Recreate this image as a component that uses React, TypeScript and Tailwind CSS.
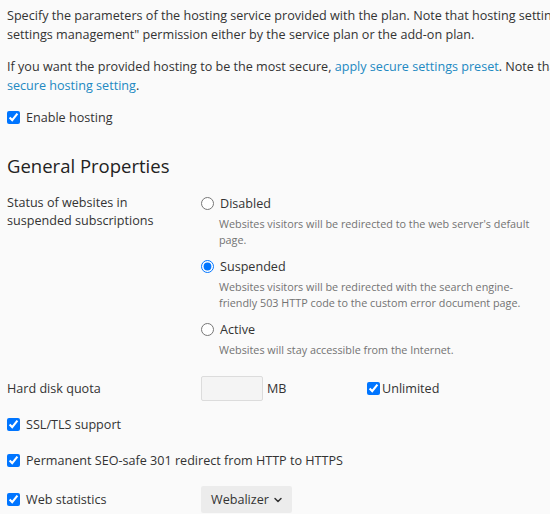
import { ChevronDown } from "lucide-react";

const font = { fontFamily: '"Open Sans", "Noto Sans", sans-serif' };

function Check({ label }: { label: string }) {
  return (
    <label className="flex items-center gap-[6px] whitespace-nowrap">
      <input type="checkbox" defaultChecked className="m-0 h-[13px] w-[13px]" />
      <span>{label}</span>
    </label>
  );
}

function Radio({
  label,
  desc,
  checked,
}: {
  label: string;
  desc: React.ReactNode;
  checked?: boolean;
}) {
  return (
    <div>
      <label className="flex items-center gap-[6px] whitespace-nowrap">
        <input type="radio" name="status" defaultChecked={checked} className="m-0 h-[13px] w-[13px]" />
        <span>{label}</span>
      </label>
      <p className="ml-[18px] mt-[3px] text-[10.8px] leading-[16px] text-[#737373]">{desc}</p>
    </div>
  );
}

export default function App() {
  return (
    <div
      style={font}
      className="h-[514px] w-[550px] overflow-hidden bg-[#fafafa] text-[12.6px] leading-[19px] text-[#333]"
    >
      <div className="w-[800px] px-[7px] pt-[6px]">
        <p className="whitespace-nowrap">
          Specify the parameters of the hosting service provided with the plan. Note that hosting settings can be
          changed by customers who have the "Hosting
          <br />
          settings management" permission either by the service plan or the add-on plan.
        </p>
        <p className="mt-[13px] whitespace-nowrap">
          If you want the provided hosting to be the most secure,{" "}
          <a className="text-[#2289c2]">apply secure settings preset</a>. Note that the preset may not be the most
          <br />
          <a className="text-[#2289c2]">secure hosting setting</a>.
        </p>
        <div className="mt-[13px]">
          <Check label="Enable hosting" />
        </div>

        <h2 className="mt-[26px] text-[18.5px] leading-[26px] text-[#222]">General Properties</h2>

        <div className="mt-[15px] flex">
          <div className="w-[194px] leading-[18px]">
            Status of websites in
            <br />
            suspended subscriptions
          </div>
          <div className="flex flex-col gap-[9px]">
            <Radio
              label="Disabled"
              desc={
                <>
                  Websites visitors will be redirected to the web server's default
                  <br />
                  page.
                </>
              }
            />
            <Radio
              checked
              label="Suspended"
              desc={
                <>
                  Websites visitors will be redirected with the search engine-
                  <br />
                  friendly 503 HTTP code to the custom error document page.
                </>
              }
            />
            <Radio label="Active" desc="Websites will stay accessible from the Internet." />
          </div>
        </div>

        <div className="mt-[18px] flex items-center">
          <div className="w-[194px]">Hard disk quota</div>
          <div className="h-[25px] w-[62px] rounded-[2px] border border-[#dcdcdc] bg-[#f4f4f4]" />
          <span className="ml-[4px] w-[100px]">MB</span>
          <label className="flex items-center gap-[2px]">
            <input type="checkbox" defaultChecked className="m-0 h-[13px] w-[13px]" />
            <span>Unlimited</span>
          </label>
        </div>

        <div className="mt-[14px]">
          <Check label="SSL/TLS support" />
        </div>
        <div className="mt-[17px]">
          <Check label="Permanent SEO-safe 301 redirect from HTTP to HTTPS" />
        </div>

        <div className="mt-[16px] flex items-center">
          <div className="w-[194px]">
            <Check label="Web statistics" />
          </div>
          <div className="flex h-[27px] w-[91px] items-center justify-between rounded-[2px] bg-[#ececec] pl-[10px] pr-[8px]">
            <span>Webalizer</span>
            <ChevronDown className="h-[12px] w-[12px]" strokeWidth={3} />
          </div>
        </div>
      </div>
    </div>
  );
}
